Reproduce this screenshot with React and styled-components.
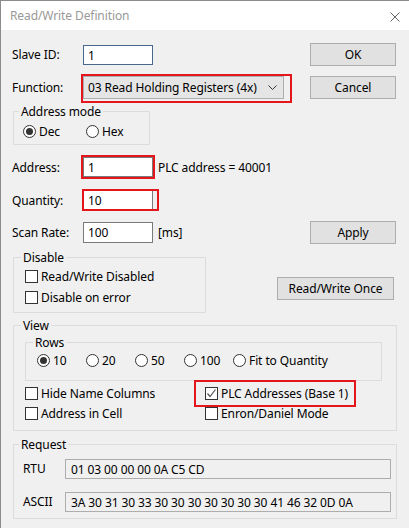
import React from "react";
import styled, { createGlobalStyle } from "styled-components";

const GlobalStyle = createGlobalStyle`
  html, body {
    margin: 0;
    padding: 0;
    background: #ffffff;
  }
  body {
    font-family: "Noto Sans", "Open Sans", sans-serif;
    font-size: 12px;
    color: #000;
  }
  * {
    box-sizing: border-box;
  }
`;

const Window = styled.div`
  width: 409px;
  height: 528px;
  display: flex;
  flex-direction: column;
  border-top: 1px solid #8c8c8c;
  border-left: 1px solid #8c8c8c;
  background: #f0f0f0;
  overflow: hidden;
`;

const TitleBar = styled.div`
  height: 29px;
  flex: none;
  display: flex;
  align-items: center;
  justify-content: space-between;
  padding: 0 9px 0 9px;
  background: #ffffff;
`;

const Title = styled.span`
  color: #999999;
  font-size: 12px;
  letter-spacing: -0.1px;
`;

const Body = styled.div`
  flex: 1;
  display: flex;
  flex-direction: column;
  padding: 13px 13px 0 11px;
  letter-spacing: -0.1px;
`;

const Row = styled.div`
  display: flex;
  align-items: center;
  height: ${({ h }) => h || 20}px;
  margin-top: ${({ mt }) => mt || 0}px;
`;

const Label = styled.span`
  width: 71px;
  flex: none;
`;

const TextBox = styled.div`
  width: 70px;
  height: ${({ h }) => h || 20}px;
  background: #fff;
  border: 1px solid ${({ focus }) => (focus ? "#47678d" : "#7a7a7a")};
  padding: 1px 0 0 4px;
  display: flex;
  align-items: center;
`;

const Note = styled.span`
  margin-left: 5px;
`;

const SideButton = styled.div`
  margin-left: auto;
  width: ${({ w }) => w || 86}px;
  height: ${({ h }) => h || 23}px;
  background: #e1e1e1;
  border: 1px solid #adadad;
  display: flex;
  align-items: center;
  justify-content: center;
  margin-right: ${({ mr }) => mr || 0}px;
`;

const Select = styled.div`
  width: 201px;
  height: 23px;
  background: #e5e5e5;
  border: 1px solid #adadad;
  display: flex;
  align-items: center;
  justify-content: space-between;
  padding: 0 6px 0 4px;
`;

const Mark = styled.span`
  position: relative;
  display: inline-flex;
  justify-self: start;
`;

const MarkBox = styled.span`
  position: absolute;
  top: ${({ t }) => t}px;
  left: ${({ l }) => l}px;
  right: ${({ r }) => r}px;
  bottom: ${({ b }) => b}px;
  border: 2px solid #e3161d;
  pointer-events: none;
`;

const Group = styled.fieldset`
  margin: ${({ mt }) => mt || 0}px 0 0 ${({ ml }) => ml || 0}px;
  width: ${({ w }) => w}px;
  height: ${({ h }) => h}px;
  border: 1px solid #dcdcdc;
  padding: ${({ pad }) => pad || "0 0 0 11px"};
  min-width: 0;
  flex: none;
`;

const Legend = styled.legend`
  padding: 0 2px;
  margin-left: -4px;
  line-height: 15px;
`;

const Options = styled.div`
  display: grid;
  grid-template-columns: ${({ cols }) => cols};
  row-gap: ${({ gap }) => gap || 0}px;
  margin-top: ${({ mt }) => mt || 0}px;
`;

const Option = styled.label`
  display: flex;
  align-items: center;
  height: 18px;
  white-space: nowrap;
  gap: 3px;
`;

const Radio = styled.span`
  width: 13px;
  height: 13px;
  border-radius: 50%;
  border: 1px solid #333;
  background: #fff;
  display: flex;
  align-items: center;
  justify-content: center;
  flex: none;
  &::after {
    content: "";
    width: 7px;
    height: 7px;
    border-radius: 50%;
    background: #333;
    display: ${({ on }) => (on ? "block" : "none")};
  }
`;

const Check = styled.span`
  width: 13px;
  height: 13px;
  border: 1px solid #333;
  background: #fff;
  flex: none;
  display: flex;
  align-items: center;
  justify-content: center;
`;

const Split = styled.div`
  display: flex;
  align-items: flex-start;
`;

const ReadOnly = styled.div`
  margin-left: auto;
  width: 326px;
  height: ${({ h }) => h || 20}px;
  border: 1px solid #adadad;
  background: #f0f0f0;
  padding: 1px 0 0 5px;
  display: flex;
  align-items: center;
`;

const CodeRow = styled.div`
  display: flex;
  align-items: flex-start;
  margin-top: ${({ mt }) => mt || 0}px;
  padding-right: 5px;
`;

const CodeLabel = styled.span`
  padding-top: 1px;
`;

const CloseIcon = () => (
  <svg width="10" height="10" viewBox="0 0 10 10" style={{ marginTop: 2 }}>
    <path d="M0.5 0.5 L9.5 9.5 M9.5 0.5 L0.5 9.5" stroke="#666" strokeWidth="1" />
  </svg>
);

const Chevron = () => (
  <svg width="9" height="5" viewBox="0 0 9 5">
    <path d="M0.5 0.5 L4.5 4.5 L8.5 0.5" stroke="#333" strokeWidth="1" fill="none" />
  </svg>
);

const Tick = () => (
  <svg width="11" height="11" viewBox="0 0 11 11">
    <path d="M1.5 5.5 L4 8.5 L9.5 1.5" stroke="#555" strokeWidth="1.2" fill="none" />
  </svg>
);

const RadioOpt = ({ on, children }) => (
  <Option>
    <Radio on={on ? 1 : 0} />
    {children}
  </Option>
);

const CheckOpt = ({ on, children }) => (
  <Option>
    <Check>{on && <Tick />}</Check>
    {children}
  </Option>
);

export default function App() {
  return (
    <>
      <GlobalStyle />
      <Window>
        <TitleBar>
          <Title>Read/Write Definition</Title>
          <CloseIcon />
        </TitleBar>
        <Body>
          <Row h={23}>
            <Label>Slave ID:</Label>
            <TextBox focus>1</TextBox>
            <SideButton>OK</SideButton>
          </Row>
          <Row h={24} mt={9}>
            <Label>Function:</Label>
            <Mark>
              <Select>
                <span>03 Read Holding Registers (4x)</span>
                <Chevron />
              </Select>
              <MarkBox t={-2} l={-2} r={-8} b={-4} />
            </Mark>
            <SideButton>Cancel</SideButton>
          </Row>

          <Group mt={5} ml={1} w={137} h={41} pad="0 0 0 9px">
            <Legend>Address mode</Legend>
            <Options cols="63px 60px" mt={3}>
              <RadioOpt on>Dec</RadioOpt>
              <RadioOpt>Hex</RadioOpt>
            </Options>
          </Group>

          <Row mt={12}>
            <Label>Address:</Label>
            <Mark>
              <TextBox>1</TextBox>
              <MarkBox t={-2} l={-2} r={-2} b={-2} />
            </Mark>
            <Note>PLC address = 40001</Note>
          </Row>
          <Row mt={13}>
            <Label>Quantity:</Label>
            <Mark>
              <TextBox>10</TextBox>
              <MarkBox t={-1} l={-1} r={-6} b={-1} />
            </Mark>
          </Row>
          <Row h={24} mt={10}>
            <Label>Scan Rate:</Label>
            <TextBox h={21}>100</TextBox>
            <Note>[ms]</Note>
            <SideButton>Apply</SideButton>
          </Row>

          <Split>
            <Group mt={6} ml={1} w={193} h={63}>
              <Legend>Disable</Legend>
              <Options cols="1fr" gap={3} mt={2}>
                <CheckOpt>Read/Write Disabled</CheckOpt>
                <CheckOpt>Disable on error</CheckOpt>
              </Options>
            </Group>
            <SideButton w={117} mr={2} style={{ marginTop: 33 }}>
              Read/Write Once
            </SideButton>
          </Split>

          <Group mt={5} ml={1} w={384} h={113}>
            <Legend>View</Legend>
            <Group mt={2} w={357} h={46} pad="0 0 0 11px">
              <Legend>Rows</Legend>
              <Options cols="49px 49px 49px 49px 1fr" mt={1}>
                <RadioOpt on>10</RadioOpt>
                <RadioOpt>20</RadioOpt>
                <RadioOpt>50</RadioOpt>
                <RadioOpt>100</RadioOpt>
                <RadioOpt>Fit to Quantity</RadioOpt>
              </Options>
            </Group>
            <Options cols="180px 1fr" gap={2} mt={3}>
              <CheckOpt>Hide Name Columns</CheckOpt>
              <Mark>
                <CheckOpt on>PLC Addresses (Base 1)</CheckOpt>
                <MarkBox t={-4} l={-11} r={-8} b={-5} />
              </Mark>
              <CheckOpt>Address in Cell</CheckOpt>
              <CheckOpt>Enron/Daniel Mode</CheckOpt>
            </Options>
          </Group>

          <Group mt={6} ml={1} w={384} h={82} pad="0 0 0 9px">
            <Legend>Request</Legend>
            <CodeRow mt={7}>
              <CodeLabel>RTU</CodeLabel>
              <ReadOnly>01 03 00 00 00 0A C5 CD</ReadOnly>
            </CodeRow>
            <CodeRow mt={13}>
              <CodeLabel>ASCII</CodeLabel>
              <ReadOnly>3A 30 31 30 33 30 30 30 30 30 30 30 41 46 32 0D 0A</ReadOnly>
            </CodeRow>
          </Group>
        </Body>
      </Window>
    </>
  );
}
